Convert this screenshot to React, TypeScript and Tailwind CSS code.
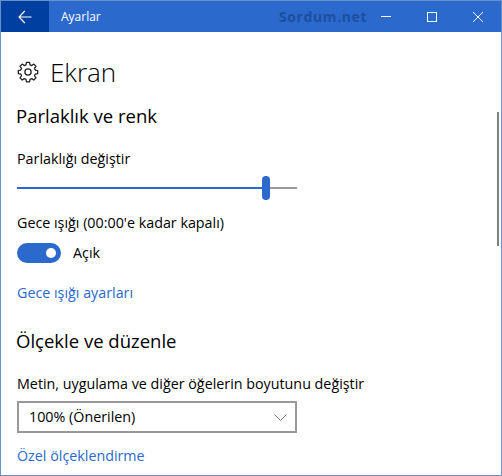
import React from "react";

const font = { fontFamily: '"Open Sans", "Noto Sans", sans-serif' };

export default function App() {
  return (
    <div className="relative flex h-[476px] w-[502px] flex-col overflow-hidden border border-[#6b8fc9] bg-white text-black" style={font}>
      <div className="flex h-[31px] w-full shrink-0 items-center bg-[#2b69cd] text-white">
        <div className="flex h-full w-12 shrink-0 items-center justify-center bg-[#003f9f]">
          <svg width="14" height="14" viewBox="0 0 14 14" fill="none" stroke="white" strokeWidth="1.1">
            <path d="M1 7H13.5M6.8 1L1 7L6.8 13" />
          </svg>
        </div>
        <div className="ml-3 text-[12px] leading-none">Ayarlar</div>
        <div className="ml-auto flex h-full shrink-0 items-center">
          <div className="flex w-[46px] justify-center">
            <div className="h-px w-[10px] bg-white" />
          </div>
          <div className="flex w-[46px] justify-center">
            <div className="h-[10px] w-[10px] border border-white" />
          </div>
          <div className="flex w-[46px] justify-center">
            <svg width="10" height="10" viewBox="0 0 10 10" fill="none" stroke="white" strokeWidth="1">
              <path d="M0 0L10 10M10 0L0 10" />
            </svg>
          </div>
        </div>
      </div>
      <div className="absolute left-[278px] top-[9px] text-[14px] font-bold leading-none tracking-[0.6px] text-[#1c4f9f]">Sordum.net</div>
      <div className="flex flex-1 flex-col pl-4 pt-[22px]">
        <div className="flex h-[36px] items-center">
          <svg width="22" height="22" viewBox="0 0 24 24" fill="none" stroke="#222" strokeWidth="1.4" strokeLinejoin="round" className="shrink-0">
            <path d="M10.3 1.5h3.4l.5 2.7 1.8.8 2.3-1.6 2.4 2.4-1.6 2.3.8 1.8 2.7.5v3.4l-2.7.5-.8 1.8 1.6 2.3-2.4 2.4-2.3-1.6-1.8.8-.5 2.7h-3.4l-.5-2.7-1.8-.8-2.3 1.6-2.4-2.4 1.6-2.3-.8-1.8-2.7-.5v-3.4l2.7-.5.8-1.8-1.6-2.3 2.4-2.4 2.3 1.6 1.8-.8z" />
            <circle cx="12" cy="12" r="3.4" />
          </svg>
          <div className="ml-[11px] text-[26px] leading-none font-light">Ekran</div>
        </div>
        <div className="-ml-px mt-[13px] text-[18.5px] leading-[26px]">Parlaklık ve renk</div>
        <div className="mt-[21px] text-[14.3px] leading-[18px]">Parlaklığı değiştir</div>
        <div className="relative mt-[8px] flex h-6 w-[280px] items-center">
          <div className="h-[2px] w-[249px] bg-[#2b69cd]" />
          <div className="h-[2px] flex-1 bg-[#999999]" />
          <div className="absolute left-[245px] top-0 h-6 w-2 rounded-full bg-[#2b69cd]" />
        </div>
        <div className="mt-[14px] text-[14.3px] leading-[18px]">Gece ışığı (00:00'e kadar kapalı)</div>
        <div className="mt-[11px] flex items-center">
          <div className="flex h-5 w-11 items-center justify-end rounded-full bg-[#2b69cd] pr-[5px]">
            <div className="h-[10px] w-[10px] rounded-full bg-white" />
          </div>
          <div className="ml-3 text-[14.3px] leading-5">Açık</div>
        </div>
        <div className="mt-[21px] text-[14.3px] leading-[18px] text-[#2b69cd]">Gece ışığı ayarları</div>
        <div className="-ml-px mt-[26px] text-[18.5px] leading-[26px]">Ölçekle ve düzenle</div>
        <div className="mt-[21px] text-[14.3px] leading-[18px]">Metin, uygulama ve diğer öğelerin boyutunu değiştir</div>
        <div className="mt-[8px] flex h-[32px] w-[280px] items-center justify-between border-2 border-[#999999] pl-[10px] pr-[8px]">
          <span className="text-[14.3px]">100% (Önerilen)</span>
          <svg width="13" height="7" viewBox="0 0 13 7" fill="none" stroke="#777" strokeWidth="1">
            <path d="M0.5 0.5L6.5 6.5L12.5 0.5" />
          </svg>
        </div>
        <div className="mt-[14px] text-[14.3px] leading-[18px] text-[#2b69cd]">Özel ölçeklendirme</div>
      </div>
      <div className="absolute right-[2px] top-[111px] h-[134px] w-[2px] bg-[#7f7f7f]" />
    </div>
  );
}
